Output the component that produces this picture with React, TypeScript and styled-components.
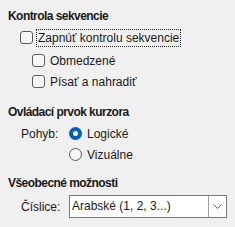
import React from 'react';
import styled, { createGlobalStyle } from 'styled-components';

const GlobalStyle = createGlobalStyle`
  html, body {
    margin: 0;
    padding: 0;
    background: #f0f0f0;
  }
  body {
    font-family: "Liberation Sans", Arial, sans-serif;
    font-size: 12px;
    color: #1a1a1a;
  }
`;

const Page = styled.div`
  width: 235px;
  height: 227px;
  padding: 8px 0 0 8px;
  box-sizing: border-box;
  background: #f0f0f0;
  overflow: hidden;
`;

const Heading = styled.div<{ $top?: number }>`
  height: 16px;
  line-height: 16px;
  font-size: 12px;
  font-weight: 700;
  letter-spacing: -0.55px;
  margin-top: ${(p) => p.$top ?? 0}px;
`;

const Body = styled.div<{ $indent: number; $top: number }>`
  padding-left: ${(p) => p.$indent}px;
  margin-top: ${(p) => p.$top}px;
  display: flex;
  flex-direction: column;
`;

const CheckRow = styled.label<{ $indent?: number; $h: number; $top?: number }>`
  display: flex;
  align-items: center;
  gap: 4px;
  height: ${(p) => p.$h}px;
  margin-top: ${(p) => p.$top ?? 0}px;
  padding-left: ${(p) => p.$indent ?? 0}px;
`;

const Box = styled.span`
  width: 11px;
  height: 11px;
  border: 1px solid #5c5c5c;
  border-radius: 3px;
  background: #f7f7f7;
  flex: none;
`;

const Label = styled.span<{ $focus?: boolean }>`
  line-height: 16px;
  padding: 0 1px;
  white-space: nowrap;
  outline: ${(p) => (p.$focus ? '1px dotted #222' : 'none')};
  outline-offset: 0;
`;

const FieldGrid = styled.div`
  display: grid;
  grid-template-columns: 48px auto;
  align-items: center;
`;

const FieldLabel = styled.span``;

const RadioRow = styled.div`
  display: flex;
  align-items: center;
  gap: 4px;
  height: 21px;
`;

const Radio = styled.span<{ $on?: boolean }>`
  width: 13px;
  height: 13px;
  box-sizing: border-box;
  border-radius: 50%;
  flex: none;
  border: ${(p) => (p.$on ? '4px solid #005fb8' : '1px solid #5c5c5c')};
  background: ${(p) => (p.$on ? '#ffffff' : '#f7f7f7')};
`;

const Select = styled.div`
  width: 158px;
  height: 23px;
  box-sizing: border-box;
  border: 1px solid #7a7a7a;
  background: #ffffff;
  display: flex;
  align-items: stretch;
`;

const SelectText = styled.span`
  flex: 1;
  padding-left: 2px;
  line-height: 21px;
  white-space: nowrap;
`;

const SelectButton = styled.span`
  width: 17px;
  border-left: 1px solid #a0a0a0;
  display: flex;
  align-items: center;
  justify-content: center;
`;

export default function App() {
  return (
    <>
      <GlobalStyle />
      <Page>
        <Heading>Kontrola sekvencie</Heading>
        <Body $indent={12} $top={4}>
          <CheckRow $h={19}>
            <Box />
            <Label $focus>Zapnúť kontrolu sekvencie</Label>
          </CheckRow>
          <CheckRow $indent={12} $h={21} $top={3}>
            <Box />
            <Label>Obmedzené</Label>
          </CheckRow>
          <CheckRow $indent={12} $h={21}>
            <Box />
            <Label>Písať a nahradiť</Label>
          </CheckRow>
        </Body>

        <Heading $top={12}>Ovládací prvok kurzora</Heading>
        <Body $indent={13} $top={3}>
          <FieldGrid>
            <FieldLabel>Pohyb:</FieldLabel>
            <RadioRow>
              <Radio $on />
              <Label>Logické</Label>
            </RadioRow>
            <span />
            <RadioRow>
              <Radio />
              <Label>Vizuálne</Label>
            </RadioRow>
          </FieldGrid>
        </Body>

        <Heading $top={10}>Všeobecné možnosti</Heading>
        <Body $indent={13} $top={4}>
          <FieldGrid>
            <FieldLabel>Číslice:</FieldLabel>
            <Select>
              <SelectText>Arabské (1, 2, 3...)</SelectText>
              <SelectButton>
                <svg width="9" height="5" viewBox="0 0 9 5">
                  <path d="M0.5 0.5 L4.5 4.5 L8.5 0.5" fill="none" stroke="#606060" strokeWidth="1" />
                </svg>
              </SelectButton>
            </Select>
          </FieldGrid>
        </Body>
      </Page>
    </>
  );
}
